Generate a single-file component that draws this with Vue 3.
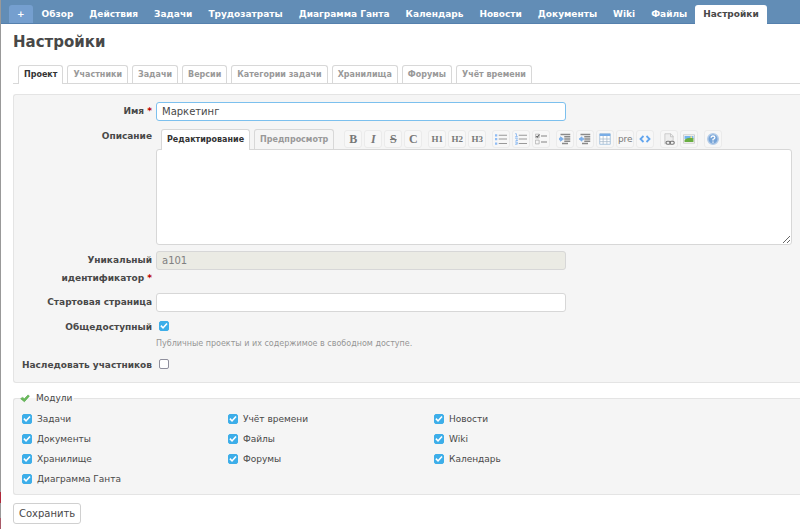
<script setup>
import { onMounted, ref } from 'vue'

const menu = ['Обзор', 'Действия', 'Задачи', 'Трудозатраты', 'Диаграмма Ганта', 'Календарь', 'Новости', 'Документы', 'Wiki', 'Файлы', 'Настройки']
const tabs = ['Проект', 'Участники', 'Задачи', 'Версии', 'Категории задачи', 'Хранилища', 'Форумы', 'Учёт времени']
const modules = ref(['Задачи', 'Учёт времени', 'Новости', 'Документы', 'Файлы', 'Wiki', 'Хранилище', 'Форумы', 'Календарь', 'Диаграмма Ганта'].map((name) => ({ name, enabled: true })))

const toolbar = [
    [
        { id: 'strong', text: 'B' },
        { id: 'em', text: 'I' },
        { id: 'del', text: 'S' },
        { id: 'code-inline', text: 'C' }
    ],
    [
        { id: 'h1', text: 'H1' },
        { id: 'h2', text: 'H2' },
        { id: 'h3', text: 'H3' }
    ],
    [{ id: 'ul' }, { id: 'ol' }, { id: 'tl' }],
    [{ id: 'bq' }, { id: 'unbq' }, { id: 'table' }, { id: 'pre', text: 'pre' }, { id: 'precode' }],
    [{ id: 'link' }, { id: 'img' }],
    [{ id: 'help' }]
]

const name = ref('Маркетинг')
const description = ref('')
const identifier = ref('a101')
const startPage = ref('')
const isPublic = ref(true)
const inherit = ref(false)
const nameInput = ref(null)

onMounted(() => {
    nameInput.value.focus()
    nameInput.value.setSelectionRange(0, 0)
})
</script>

<template>
    <div class="page">
        <nav class="main-menu">
            <a href="#" class="new-object">+</a>
            <a v-for="item in menu" :key="item" href="#" :class="{ selected: item === 'Настройки' }">{{ item }}</a>
        </nav>

        <main class="content">
            <h2>Настройки</h2>

            <div class="tabs">
                <a v-for="tab in tabs" :key="tab" href="#" :class="{ selected: tab === 'Проект' }">{{ tab }}</a>
            </div>

            <form @submit.prevent>
                <div class="box tabular">
                    <label for="name">Имя <span class="required">*</span></label>
                    <input id="name" ref="nameInput" v-model="name" type="text">

                    <label for="description">Описание</label>
                    <div class="editor">
                        <div class="editor-head">
                            <div class="editor-tabs">
                                <a href="#" class="selected">Редактирование</a>
                                <a href="#">Предпросмотр</a>
                            </div>
                            <div class="toolbar">
                                <div v-for="(group, i) in toolbar" :key="i" class="group">
                                    <button v-for="b in group" :key="b.id" type="button" :class="'tb-' + b.id" :aria-label="b.id">
                                        <template v-if="b.text">{{ b.text }}</template>
                                        <svg v-else viewBox="0 0 16 16" width="12" height="12">
                                            <g v-if="b.id === 'ul'">
                                                <path d="M5 3h11M5 8h11M5 14h11" stroke="#999" stroke-width="1.5" />
                                                <path d="M0 3h3M0 8h3M0 14h3" stroke="#8fbcf5" stroke-width="3" />
                                            </g>
                                            <g v-if="b.id === 'ol'">
                                                <path d="M5 3h11M5 8h11M5 14h11" stroke="#999" stroke-width="1.5" />
                                                <path d="M0 1h2v4M0 5h4M0 7h3v1.5L1 10h3M0 12h3v3H0M1 13.5h2" fill="none" stroke="#7fb2f0" />
                                            </g>
                                            <g v-if="b.id === 'tl'" fill="none" stroke="#aaa">
                                                <path d="M8 4h8M8 12h8" stroke-width="1.8" />
                                                <path d="M.5 1.5h5v5h-5zM.5 9.500h5v5h-5z" />
                                                <path d="M1.5 4l1.5 1.5L6 2" stroke="#666" stroke-width="1.4" />
                                            </g>
                                            <g v-if="b.id === 'bq' || b.id === 'unbq'">
                                                <path d="M2 2h13M7 5h8M7 8h8M7 11h8M4 14h8" stroke="#8a8a8a" stroke-width="2.2" />
                                                <path v-if="b.id === 'bq'" d="M0 7h2V5l4 3-4 3V9H0z" fill="#7aaeea" stroke="#7aaeea" />
                                                <path v-else d="M6 7H4V5L0 8l4 3V9h2z" fill="#7aaeea" stroke="#7aaeea" />
                                            </g>
                                            <g v-if="b.id === 'table'">
                                                <path d="M1 1h14v14H1z" fill="#fff" stroke="#8fb3d6" />
                                                <path d="M1 1h14v3H1z" fill="#79ade6" />
                                                <path d="M1 8h14M1 11.5h14M5.5 4v11M10.500 4v11" stroke="#a5b8ca" />
                                            </g>
                                            <path v-if="b.id === 'precode'" d="M6 4L2 8l4 4M10 4l4 4-4 4" fill="none" stroke="#62a5ee" stroke-width="2.4" />
                                            <g v-if="b.id === 'link'">
                                                <path d="M2.500 15V1h8l3 3v8" fill="#eee" stroke="#c2c2c2" />
                                                <path d="M10 1v4h4" fill="none" stroke="#bbb" />
                                                <rect x="4" y="11" width="6" height="4" rx="2" fill="none" stroke="#777" stroke-width="1.6" />
                                                <rect x="9" y="11" width="6" height="4" rx="2" fill="none" stroke="#777" stroke-width="1.6" />
                                            </g>
                                            <g v-if="b.id === 'img'">
                                                <path d="M.5 2.5h15v11H.5z" fill="#fff" stroke="#bbb" />
                                                <path d="M2 4h12v4H2z" fill="#74b5ed" />
                                                <path d="M2 9q5-4 12-2v5H2z" fill="#69ad42" />
                                                <circle cx="11" cy="5.5" r="1.2" fill="#ffe680" />
                                            </g>
                                            <g v-if="b.id === 'help'">
                                                <circle cx="8" cy="8" r="7" fill="#78a5d8" stroke="#b4cce8" stroke-width="2" />
                                                <path d="M5.500 6.300Q5.500 4 8 4t2.500 2.200Q10.500 7.500 8 8.500V10M8 11.200v1.800" fill="none" stroke="#fff" stroke-width="1.7" />
                                            </g>
                                        </svg>
                                    </button>
                                </div>
                            </div>
                        </div>
                        <textarea id="description" v-model="description"></textarea>
                    </div>

                    <label for="identifier"><span>Уникальный</span> <span>идентификатор</span> <span class="required">*</span></label>
                    <input id="identifier" v-model="identifier" type="text" disabled>

                    <label for="start">Стартовая страница</label>
                    <input id="start" v-model="startPage" type="text">

                    <label for="public">Общедоступный</label>
                    <div class="check-cell">
                        <input id="public" v-model="isPublic" type="checkbox">
                        <em>Публичные проекты и их содержимое в свободном доступе.</em>
                    </div>

                    <label for="inherit">Наследовать участников</label>
                    <div class="check-cell">
                        <input id="inherit" v-model="inherit" type="checkbox">
                    </div>
                </div>

                <fieldset class="box modules">
                    <legend>
                        <svg viewBox="0 0 16 16" width="10" height="10">
                            <path d="M1 9l3-2 3 2 6-6 2 2-8 9z" fill="#6cbb5c" stroke="#4fa345" />
                        </svg>
                        Модули
                    </legend>
                    <label v-for="m in modules" :key="m.name">
                        <input v-model="m.enabled" type="checkbox">
                        {{ m.name }}
                    </label>
                </fieldset>

                <button type="submit" class="submit">Сохранить</button>
            </form>
        </main>
    </div>
</template>

<style>
    body {
        margin: 0;
        background: #fff;
    }
</style>

<style scoped>
    * {
        box-sizing: border-box;
    }

    .page {
        min-height: 100vh;
        padding-left: 1px;
        background: linear-gradient(#999 93%, #b0283a 93%, #b0283a 95%, #999 95%, #999 98%, #a85a68 98%) left / 1px 100% no-repeat;
        font-family: "DejaVu Sans", sans-serif;
        font-size: 9px;
        color: #484848;
        overflow: hidden;
    }

    a {
        text-decoration: none;
    }

    .main-menu {
        display: flex;
        align-items: flex-end;
        height: 24px;
        padding-left: 8px;
        background: #628db6;
        border-bottom: 1px solid #5580ad;
        white-space: nowrap;
    }

    .main-menu a {
        height: 18px;
        padding: 0 8px;
        line-height: 19px;
        font-weight: bold;
        color: #fff;
    }

    .main-menu .new-object {
        margin-right: 1px;
        background: #759fcf;
        border-radius: 3px 3px 0 0;
    }

    .main-menu .selected {
        background: #fff;
        color: #484848;
        border-radius: 3px 3px 0 0;
        margin-bottom: -1px;
        height: 19px;
    }

    .content {
        padding: 8px 0 0 12px;
    }

    h2 {
        margin: 0;
        font-size: 15px;
        line-height: 20px;
    }

    .tabs {
        display: flex;
        gap: 4px;
        height: 19px;
        margin: 13px 0 10px;
        padding-left: 5px;
        border-bottom: 1px solid #d8d8d8;
        white-space: nowrap;
    }

    .tabs a,
    .editor-tabs a {
        padding: 0 5px;
        border: 1px solid #d8d8d8;
        border-bottom: none;
        border-radius: 3px 3px 0 0;
        line-height: 17px;
        font-size: 8px;
        font-weight: bold;
        color: #999;
    }

    .tabs .selected,
    .editor-tabs .selected {
        background: #fff;
        color: #333;
        margin-bottom: -1px;
    }

    .box {
        background: #f5f5f5;
        border: 1px solid #e4e4e4;
        border-right: none;
        border-radius: 3px 0 0 3px;
    }

    .tabular {
        display: grid;
        grid-template-columns: 138px 1fr;
        column-gap: 4px;
        row-gap: 6px;
        padding: 7px 8px 8px 0;
    }

    .tabular > label {
        line-height: 18px;
        font-weight: bold;
        text-align: right;
    }

    .required {
        color: #bb0000;
    }

    input[type="text"] {
        width: 100%;
        max-width: 410px;
        height: 19px;
        margin: 0;
        padding: 0 5px;
        border: 1px solid #d7d7d7;
        border-radius: 3px;
        background: #fff;
        font: 10px "DejaVu Sans", sans-serif;
        color: #484848;
    }

    input[type="text"]:focus {
        outline: none;
        border-color: #7cc0ee;
    }

    input[type="text"]:disabled {
        background: #ebebe4;
        color: #808080;
    }

    .editor-head {
        display: flex;
        gap: 10px;
        height: 22px;
        padding: 2px 0 0 5px;
    }

    .editor-tabs {
        display: flex;
        gap: 4px;
        white-space: nowrap;
    }

    .editor-tabs a {
        line-height: 20px;
        height: 20px;
    }

    .editor-tabs .selected {
        height: 21px;
        position: relative;
    }

    .toolbar,
    .group {
        display: flex;
    }

    .toolbar {
        gap: 6px;
    }

    .group {
        gap: 2px;
    }

    .group button {
        display: flex;
        align-items: center;
        justify-content: center;
        width: 18px;
        height: 18px;
        margin-top: 1px;
        padding: 0;
        border: 1px solid #ebebeb;
        border-radius: 3px;
        background: #f7f7f7;
        font: bold 12px "Liberation Serif", serif;
        color: #777;
    }

    .group .tb-em {
        font-style: italic;
    }

    .group .tb-del {
        text-decoration: line-through;
    }

    .group .tb-h1,
    .group .tb-h2,
    .group .tb-h3 {
        font-size: 9px;
    }

    .group .tb-pre {
        font: 9px "DejaVu Sans", sans-serif;
    }

    textarea {
        display: block;
        width: 100%;
        height: 96px;
        border: 1px solid #d7d7d7;
        border-radius: 3px;
        background: #fff;
        font: 10px "DejaVu Sans", sans-serif;
        resize: both;
    }

    input[type="checkbox"] {
        appearance: none;
        display: grid;
        place-content: center;
        flex: none;
        width: 10px;
        height: 10px;
        margin: 0;
        border: 1px solid #8f8f9d;
        border-radius: 2px;
        background: #fff;
    }

    input[type="checkbox"]:checked {
        border-color: #3daee9;
        background: #3daee9;
    }

    input[type="checkbox"]:checked::before {
        content: "";
        width: 8px;
        height: 8px;
        background: #fff;
        clip-path: polygon(4% 52%, 18% 38%, 38% 60%, 80% 12%, 95% 26%, 38% 88%);
    }

    .check-cell {
        padding: 3px 0 0 3px;
    }

    .check-cell em {
        display: block;
        margin: 7px 0 0 -3px;
        line-height: 12px;
        font-size: 8px;
        font-style: normal;
        color: #959595;
    }

    .modules {
        display: grid;
        grid-template-columns: repeat(auto-fill, 206px);
        margin: 8px 0;
        padding: 4px 0 5px 8px;
    }

    .modules legend {
        display: flex;
        align-items: center;
        gap: 6px;
        margin-left: -2px;
        padding: 0 2px 0 0;
        line-height: 14px;
    }

    .modules label {
        display: flex;
        align-items: center;
        gap: 5px;
        height: 20px;
    }

    .submit {
        height: 21px;
        padding: 0 5px;
        border: 1px solid #d0d0d0;
        border-radius: 3px;
        background: #fff;
        font: 10px "DejaVu Sans", sans-serif;
        color: #484848;
    }
</style>
